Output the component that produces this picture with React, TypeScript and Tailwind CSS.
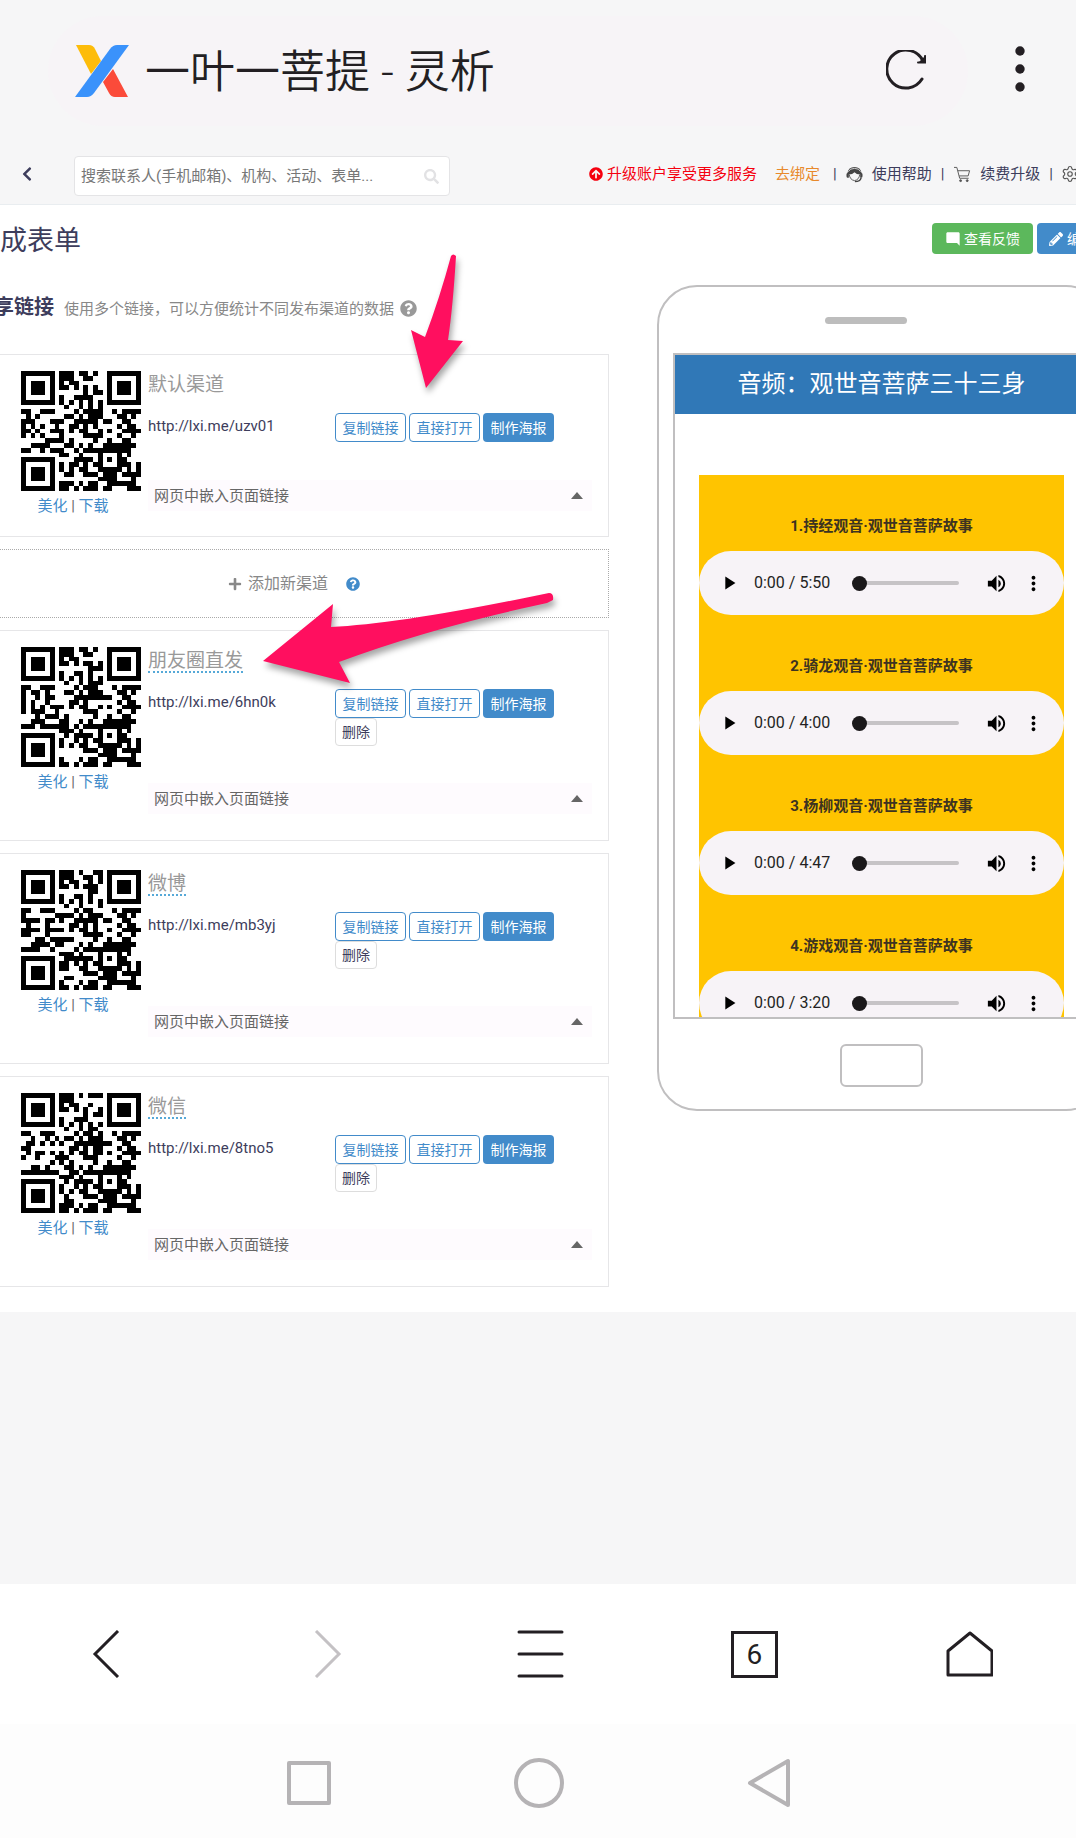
import React from "react";
import { FaArrowCircleUp, FaQuestionCircle, FaChevronLeft, FaPlus, FaPencilAlt, FaSearch } from "react-icons/fa";
import { MdModeComment, MdMoreVert, MdPlayArrow, MdVolumeUp } from "react-icons/md";
import { Settings } from "lucide-react";

/* ---------- QR code, version 2 (25 x 25), level L, byte mode ---------- */

const SIZE = 25;
const DATA_WORDS = 34;
const EC_WORDS = 10;
const MASK = 4;
const masked = (r: number, c: number) => (Math.floor(r / 2) + Math.floor(c / 3)) % 2 === 0;

function gfMul(a: number, b: number) {
  let p = 0;
  for (let i = 7; i >= 0; i--) {
    p = (p << 1) ^ ((p >> 7) * 0x11d);
    if ((b >> i) & 1) p ^= a;
  }
  return p;
}

function codewords(text: string) {
  const bits: number[] = [];
  const put = (v: number, n: number) => {
    for (let i = n - 1; i >= 0; i--) bits.push((v >> i) & 1);
  };
  put(4, 4);
  put(text.length, 8);
  for (const ch of text) put(ch.charCodeAt(0), 8);
  put(0, 4);
  const bytes: number[] = [];
  for (let i = 0; i < bits.length; i += 8) bytes.push(parseInt(bits.slice(i, i + 8).join(""), 2));
  for (let pad = 0xec; bytes.length < DATA_WORDS; pad ^= 0xec ^ 0x11) bytes.push(pad);

  const gen: number[] = new Array(EC_WORDS).fill(0);
  gen[EC_WORDS - 1] = 1;
  let root = 1;
  for (let i = 0; i < EC_WORDS; i++) {
    for (let j = 0; j < EC_WORDS; j++) {
      gen[j] = gfMul(gen[j], root);
      if (j + 1 < EC_WORDS) gen[j] ^= gen[j + 1];
    }
    root = gfMul(root, 2);
  }
  const rem: number[] = new Array(EC_WORDS).fill(0);
  for (const b of bytes) {
    const f = b ^ (rem.shift() as number);
    rem.push(0);
    gen.forEach((g, i) => (rem[i] ^= gfMul(g, f)));
  }
  return bytes.concat(rem);
}

function makeQr(text: string) {
  const m: boolean[][] = Array.from({ length: SIZE }, () => new Array(SIZE).fill(false));
  const fixed: boolean[][] = Array.from({ length: SIZE }, () => new Array(SIZE).fill(false));
  const set = (r: number, c: number, v: boolean) => {
    if (r < 0 || c < 0 || r >= SIZE || c >= SIZE) return;
    m[r][c] = v;
    fixed[r][c] = true;
  };
  for (let i = 0; i < SIZE; i++) {
    set(6, i, i % 2 === 0);
    set(i, 6, i % 2 === 0);
  }
  for (const [cr, cc] of [[3, 3], [3, SIZE - 4], [SIZE - 4, 3]])
    for (let dr = -4; dr <= 4; dr++)
      for (let dc = -4; dc <= 4; dc++) {
        const d = Math.max(Math.abs(dr), Math.abs(dc));
        set(cr + dr, cc + dc, d !== 2 && d !== 4);
      }
  for (let dr = -2; dr <= 2; dr++)
    for (let dc = -2; dc <= 2; dc++) set(18 + dr, 18 + dc, Math.max(Math.abs(dr), Math.abs(dc)) !== 1);

  const d = (1 << 3) | MASK;
  let rem = d;
  for (let i = 0; i < 10; i++) rem = (rem << 1) ^ ((rem >> 9) * 0x537);
  const fmt = ((d << 10) | rem) ^ 0x5412;
  const bit = (i: number) => ((fmt >> i) & 1) === 1;
  for (let i = 0; i <= 5; i++) set(i, 8, bit(i));
  set(7, 8, bit(6));
  set(8, 8, bit(7));
  set(8, 7, bit(8));
  for (let i = 9; i < 15; i++) set(8, 14 - i, bit(i));
  for (let i = 0; i < 8; i++) set(8, SIZE - 1 - i, bit(i));
  for (let i = 8; i < 15; i++) set(SIZE - 15 + i, 8, bit(i));
  set(SIZE - 8, 8, true);

  const words = codewords(text);
  let k = 0;
  for (let right = SIZE - 1; right >= 1; right -= 2) {
    if (right === 6) right = 5;
    for (let v = 0; v < SIZE; v++)
      for (let j = 0; j < 2; j++) {
        const c = right - j;
        const up = ((right + 1) & 2) === 0;
        const r = up ? SIZE - 1 - v : v;
        if (fixed[r][c]) continue;
        const on = k < words.length * 8 && ((words[k >> 3] >> (7 - (k & 7))) & 1) === 1;
        k++;
        m[r][c] = on !== masked(r, c);
      }
  }
  return m;
}

function QrCode({ text }: { text: string }) {
  const d = makeQr(text)
    .map((row, r) => row.map((v, c) => (v ? `M${c} ${r}h1v1h-1z` : "")).join(""))
    .join("");
  return (
    <svg viewBox="0 0 25 25" className="size-[120px]" shapeRendering="crispEdges" role="img" aria-label={text}>
      <path d={d} />
    </svg>
  );
}

/* ---------- Browser chrome ---------- */

function Logo() {
  return (
    <svg viewBox="0 0 54 52" className="h-[52px] w-[54px]" aria-hidden="true">
      <path d="M1 0h13q4 0 6 4l6 12-10 13z" fill="#fdbc0a" />
      <path d="M53 52H40q-4 0-6-4l-6-11 10-13z" fill="#fb4b3a" />
      <path d="M54 0H42q-4 0-7 4L0 52h12q4 0 7-4z" fill="#3a92fb" />
    </svg>
  );
}

function BrowserBar() {
  return (
    <header className="flex h-[146px] items-start pt-4 pr-9 pl-12">
      <div className="flex h-[110px] flex-1 items-center rounded-full bg-[#f7f4f7] pr-10 pl-[27px]">
        <Logo />
        <h1 className="ml-4 flex-1 pt-[3px] text-[45px] leading-[60px] font-[350] text-[#231f23]">一叶一菩提 - 灵析</h1>
        <button type="button" aria-label="刷新">
          <svg viewBox="0 0 42 42" className="size-[42px]" fill="none" stroke="#231f23" strokeWidth="3" strokeLinecap="round">
            <path d="M36 29A19 19 0 1 1 37 11" />
            <path d="M40 5v8h-8z" fill="#231f23" stroke="none" />
            <path d="M32 12.500h7V6" strokeWidth="2" />
          </svg>
        </button>
      </div>
      <button type="button" aria-label="更多" className="mt-7 ml-8 flex h-[52px] w-10 items-center justify-center">
        <svg viewBox="0 0 10 48" className="h-12 w-[10px]" fill="#231f23">
          <circle cx="5" cy="5" r="4.700" />
          <circle cx="5" cy="23" r="4.700" />
          <circle cx="5" cy="41" r="4.700" />
        </svg>
      </button>
    </header>
  );
}

function AgentIcon() {
  return (
    <svg viewBox="0 0 18 18" className="size-[17px]" aria-hidden="true">
      <path d="M3 12.500H1.500Q.5 12 .5 10.500V9q0-1 1-1.500Q2.500 1 9 1t7.500 6.500q1 .5 1 1.500v1.500q0 1.500-1 2H15V9q-4 0-6-2.500Q7 9 3 9z" fill="#444" />
      <path d="M2.500 6Q4 2.500 9 2.500T15.500 6" fill="none" stroke="#f6f6f7" strokeWidth=".8" />
      <path d="M3.500 9q.5 5.500 5.500 6.500 5-1 5.500-6.500" fill="none" stroke="#555" />
      <path d="M16 12.500q-1 4-6.500 4" fill="none" stroke="#444" strokeWidth="1.500" />
    </svg>
  );
}

function CartIcon() {
  return (
    <svg viewBox="0 0 18 18" className="size-[17px]" fill="none" stroke="#555" aria-hidden="true">
      <path d="M0 1.500h3L6 13h9.500M4 5h12.500L15 10.500H5.500" />
      <circle cx="7" cy="15.500" r="1" fill="#555" />
      <circle cx="14" cy="15.500" r="1" fill="#555" />
    </svg>
  );
}

function Toolbar() {
  return (
    <div className="flex h-[59px] items-start border-b border-[#e9edf0] pt-[10px] text-[15px] leading-[22px] whitespace-nowrap text-[#3d3d5c]">
      <button type="button" aria-label="返回" className="mt-[10px] ml-[19px] w-4">
        <FaChevronLeft className="size-4" />
      </button>
      <label className="ml-[39px] flex h-10 w-[376px] items-center rounded-sm border border-[#e4e4e6] bg-white px-[6px]">
        <input
          type="text"
          aria-label="搜索"
          placeholder="搜索联系人(手机邮箱)、机构、活动、表单..."
          className="w-full min-w-0 flex-1 outline-none placeholder:text-[#777]"
        />
        <FaSearch className="mr-1 size-[15px] text-[#e2e2e4]" />
      </label>
      <nav className="mt-[7px] ml-auto -mr-[3px] flex items-center">
        <a href="#upgrade" className="flex items-center gap-1 text-[#f5000f]">
          <FaArrowCircleUp className="size-[14px]" />
          升级账户享受更多服务
        </a>
        <a href="#bind" className="ml-[18px] text-[#e8892b]">去绑定</a>
        <span className="ml-[13px]">|</span>
        <a href="#help" className="ml-[9px] flex items-center gap-[9px]">
          <AgentIcon />
          使用帮助
        </a>
        <span className="ml-[9px]">|</span>
        <a href="#renew" className="ml-[10px] flex items-center gap-[9px]">
          <CartIcon />
          续费升级
        </a>
        <span className="ml-[9px]">|</span>
        <a href="#settings" aria-label="设置" className="ml-2">
          <Settings className="size-[18px] text-[#555]" strokeWidth={1.5} />
        </a>
      </nav>
    </div>
  );
}

/* ---------- Share channels ---------- */

const outlineButton =
  "h-[29px] w-[71px] rounded border border-[#428bca] bg-white text-[14px] leading-5 text-[#428bca]";

interface Channel {
  name: string;
  url: string;
  removable: boolean;
}

const channels: Channel[] = [
  { name: "默认渠道", url: "http://lxi.me/uzv01", removable: false },
  { name: "朋友圈直发", url: "http://lxi.me/6hn0k", removable: true },
  { name: "微博", url: "http://lxi.me/mb3yj", removable: true },
  { name: "微信", url: "http://lxi.me/8tno5", removable: true },
];

function ChannelCard({ channel }: { channel: Channel }) {
  const { name, url, removable } = channel;
  return (
    <article
      className={`flex border border-l-0 border-[#e6e6e8] pt-4 pr-4 pl-[21px] ${removable ? "h-[211px]" : "h-[183px]"}`}
    >
      <div className="w-[120px] shrink-0 text-center text-[15px] leading-[22px]">
        <QrCode text={url} />
        <div className="mt-1 pr-4 text-[#666]">
          <a href="#beautify" className="text-[#428bca]">美化</a> | <a href="#download" className="text-[#428bca]">下载</a>
        </div>
      </div>
      <div className="flex flex-1 flex-col pl-[7px]">
        <h3 className="h-[26px] text-[19px] leading-[28px] text-[#999]">
          <span className={removable ? "inline-block h-[26px] border-b-2 border-dotted border-[#56a9d8]" : ""}>{name}</span>
        </h3>
        <div className="mt-4 flex">
          <a href={url} className="w-[187px] text-[15px] leading-[26px] text-[#3d3d5c]">{url}</a>
          <div className="flex flex-1 flex-wrap gap-x-[3px]">
            <button type="button" className={outlineButton}>复制链接</button>
            <button type="button" className={outlineButton}>直接打开</button>
            <button type="button" className="h-[29px] w-[71px] rounded bg-[#428bca] text-[14px] leading-5 text-white">
              制作海报
            </button>
            {removable && (
              <button type="button" className="h-7 rounded-sm border border-[#ddd] bg-white px-[6px] text-[14px] leading-5 text-[#3d3d5c]">
                删除
              </button>
            )}
          </div>
        </div>
        <button
          type="button"
          className={`flex h-[31px] items-center justify-between bg-[#fefbfe] pr-[9px] pl-[6px] text-[15px] leading-[22px] text-[#666] ${removable ? "mt-[37px]" : "mt-[38px]"}`}
        >
          网页中嵌入页面链接
          <svg viewBox="0 0 12 7" className="h-[7px] w-3" fill="#666" aria-hidden="true">
            <path d="M6 0l6 7H0z" />
          </svg>
        </button>
      </div>
    </article>
  );
}

function Arrows() {
  return (
    <svg
      viewBox="0 0 609 700"
      className="pointer-events-none absolute top-0 left-0 h-[700px] w-[609px] drop-shadow-[2px_5px_3px_rgba(0,0,0,0.35)]"
      fill="#ff0f5f"
      aria-hidden="true"
    >
      <g transform="translate(0 -206)">
        <path d="M451 257q2-3 5 0-3 50-8 84l15 1L426 389 411 331l14 7q15-40 26-81z" />
        <path d="M549 594q5 0 4 7l-6 3Q430 629 339 663l11 21-87-22 70-57-2 23q70-3 218-34z" />
      </g>
    </svg>
  );
}

function ShareLinks() {
  return (
    <section className="min-w-0 flex-1">
      <div className="flex h-[66px] items-center gap-[10px] pt-px whitespace-nowrap">
        <h2 className="-ml-[6px] text-[20px] leading-7 font-bold text-[#3d3d5c]">享链接</h2>
        <p className="flex items-center gap-[6px] pt-1 text-[15px] leading-[22px] text-[#888]">
          使用多个链接，可以方便统计不同发布渠道的数据
          <FaQuestionCircle className="size-[17px] text-[#999]" />
        </p>
      </div>
      <div className="mt-[15px] flex flex-col gap-3">
        <ChannelCard channel={channels[0]} />
        <button
          type="button"
          className="flex h-[69px] items-center justify-center border border-l-0 border-dotted border-[#aaa] text-[16px] leading-6 text-[#888]"
        >
          <span className="flex items-center gap-[6px] pr-[18px]">
            <FaPlus className="size-[14px]" />
            添加新渠道
          </span>
          <FaQuestionCircle className="mr-5 size-[14px] text-[#428bca]" />
        </button>
        {channels.slice(1).map((c) => (
          <ChannelCard key={c.url} channel={c} />
        ))}
      </div>
    </section>
  );
}

/* ---------- Phone preview ---------- */

const tracks = [
  { title: "1.持经观音·观世音菩萨故事", length: "5:50" },
  { title: "2.骑龙观音·观世音菩萨故事", length: "4:00" },
  { title: "3.杨柳观音·观世音菩萨故事", length: "4:47" },
  { title: "4.游戏观音·观世音菩萨故事", length: "3:20" },
];

function Player({ length, title }: { length: string; title: string }) {
  return (
    <div className="flex h-16 items-center rounded-full bg-[#f7f3f7] pr-[19px] pl-[19px] text-[16px] text-[#231f23]">
      <button type="button" aria-label="播放" className="w-[22px]">
        <MdPlayArrow className="size-[22px] text-black" />
      </button>
      <span className="ml-[14px] w-[88px] leading-6">0:00 / {length}</span>
      <input
        type="range"
        defaultValue={0}
        aria-label={title}
        className="ml-[10px] h-1 min-w-0 flex-1 appearance-none rounded-full bg-[#c6c3c6] [&::-webkit-slider-thumb]:size-[15px] [&::-webkit-slider-thumb]:appearance-none [&::-webkit-slider-thumb]:rounded-full [&::-webkit-slider-thumb]:bg-[#1a181a]"
      />
      <button type="button" aria-label="音量" className="ml-[26px]">
        <MdVolumeUp className="size-[23px] text-black" />
      </button>
      <button type="button" aria-label="更多选项" className="ml-[14px]">
        <MdMoreVert className="size-[23px] text-black" />
      </button>
    </div>
  );
}

function PhonePreview() {
  return (
    <aside className="w-[419px] shrink-0 pt-3">
      <div className="flex h-[826px] w-[449px] flex-col items-center rounded-[40px] border-2 border-[#c0bfc0] bg-white">
        <div className="mt-[30px] h-[7px] w-[82px] -translate-x-4 rounded-full bg-[#bdbdbd]" />
        <div className="mt-[29px] h-[666px] w-[417px] shrink-0 overflow-hidden border-2 border-[#c0bfc0]">
          <h2 className="h-[59px] bg-[#3078b7] text-center text-[24px] leading-[59px] text-white">音频：观世音菩萨三十三身</h2>
          <div className="mx-6 mt-[61px] bg-[#ffc400]">
            {tracks.map((t) => (
              <div key={t.length} className="h-[140px]">
                <h3 className="h-[76px] pt-10 text-center text-[15px] leading-[22px] font-bold text-[#3d3320]">{t.title}</h3>
                <Player length={t.length} title={t.title} />
              </div>
            ))}
          </div>
        </div>
        <div className="mt-[25px] h-[43px] w-[83px] rounded-md border-2 border-[#c0bfc0]" />
      </div>
    </aside>
  );
}

/* ---------- Bottom bars ---------- */

function BrowserNav() {
  return (
    <nav className="grid h-[140px] grid-cols-5 place-items-center bg-white pl-1" aria-label="浏览器">
      <button type="button" aria-label="后退">
        <svg viewBox="0 0 48 48" className="size-12" fill="none" stroke="#231f23" strokeWidth="3">
          <path d="M31 1L8 24l23 23" />
        </svg>
      </button>
      <button type="button" aria-label="前进">
        <svg viewBox="0 0 48 48" className="size-12" fill="none" stroke="#c4c1c4" strokeWidth="3">
          <path d="M14 1l23 23-23 23" />
        </svg>
      </button>
      <button type="button" aria-label="菜单">
        <svg viewBox="0 0 48 48" className="size-12" fill="none" stroke="#231f23" strokeWidth="3" strokeLinecap="round">
          <path d="M3 2h43M3 24h43M3 46h43" />
        </svg>
      </button>
      <button
        type="button"
        aria-label="标签页 6"
        className="flex size-[47px] items-center justify-center border-3 border-[#231f23] pt-[2px] text-[28px] leading-8 text-[#231f23]"
      >
        6
      </button>
      <button type="button" aria-label="主页">
        <svg viewBox="0 0 48 48" className="size-12" fill="none" stroke="#231f23" strokeWidth="3" strokeLinejoin="round">
          <path d="M25 3l22 18v24H3V21z" />
        </svg>
      </button>
    </nav>
  );
}

function SystemNav() {
  return (
    <nav className="flex h-[114px] items-center justify-center gap-[183px] bg-[#fdfdfd] pt-1 pl-[2px]" aria-label="系统">
      <button type="button" aria-label="最近任务" className="size-[44px] rounded-xs border-4 border-[#b5b3b5]" />
      <button type="button" aria-label="主屏幕" className="size-[50px] rounded-full border-4 border-[#b5b3b5]" />
      <button type="button" aria-label="返回">
        <svg viewBox="0 0 44 50" className="h-[50px] w-11" fill="none" stroke="#b5b3b5" strokeWidth="4" strokeLinejoin="round">
          <path d="M41 3v44L3 25z" />
        </svg>
      </button>
    </nav>
  );
}

export default function App() {
  return (
    <div className="flex min-h-screen flex-col overflow-hidden bg-[#f6f6f7] font-[Roboto,'Noto_Sans_CJK_SC',sans-serif]">
      <BrowserBar />
      <Toolbar />
      <main className="relative bg-white pb-[25px]">
        <div className="flex h-[68px] items-start justify-between">
          <h2 className="mt-4 text-[27px] leading-10 text-[#3d3d5c]">成表单</h2>
          <div className="mt-[18px] -mr-[31px] flex gap-1 text-[14px] leading-5 text-white">
            <button type="button" className="flex h-[31px] w-[101px] items-center justify-center gap-[3px] rounded bg-[#5cb85c]">
              <MdModeComment className="size-4" />
              查看反馈
            </button>
            <button type="button" className="flex h-[31px] items-center gap-1 rounded bg-[#428bca] px-3">
              <FaPencilAlt className="size-[14px]" />
              编辑
            </button>
          </div>
        </div>
        <div className="flex gap-12">
          <ShareLinks />
          <PhonePreview />
        </div>
        <Arrows />
      </main>
      <div className="min-h-[200px] flex-1" />
      <BrowserNav />
      <SystemNav />
    </div>
  );
}
